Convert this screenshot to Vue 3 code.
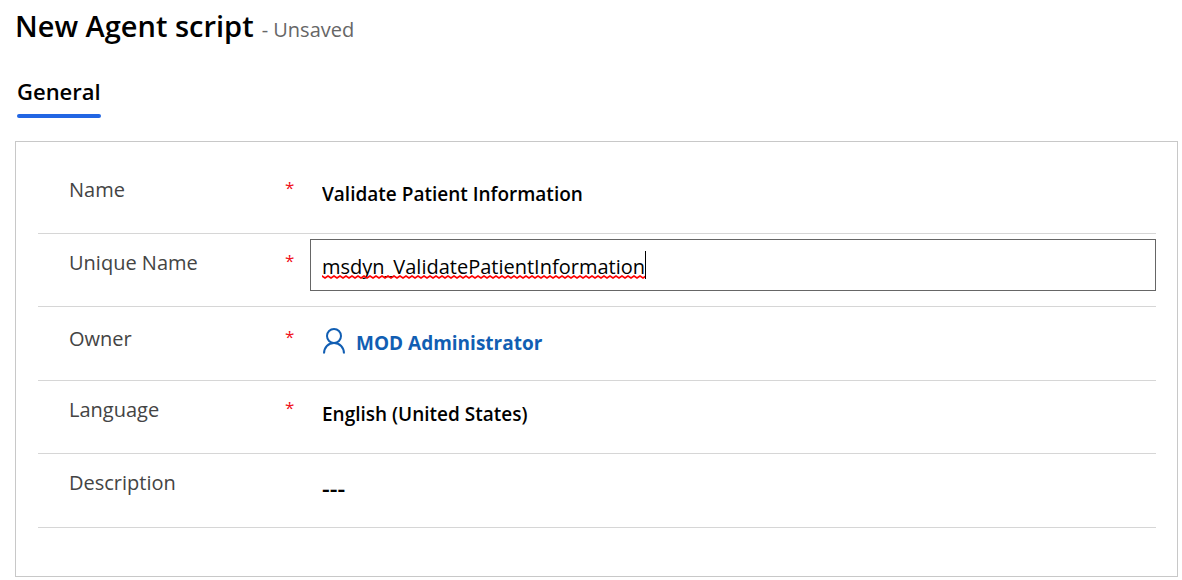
<script setup>
import { ref } from 'vue'

const name = ref('Validate Patient Information')
const uniqueName = ref('msdyn_ValidatePatientInformation')
const language = ref('English (United States)')
const description = ref('---')
</script>

<template>
  <main class="page">
    <header class="heading">
      <h1>New Agent script</h1>
      <span class="status">- Unsaved</span>
    </header>

    <nav class="tabs" role="tablist">
      <button class="tab" type="button" role="tab" aria-selected="true">General</button>
    </nav>

    <form class="card" @submit.prevent>
      <div class="row">
        <label for="name">Name</label>
        <span class="required">*</span>
        <input id="name" v-model="name" class="value" type="text" required />
      </div>

      <div class="row">
        <label for="unique-name">Unique Name</label>
        <span class="required">*</span>
        <div class="editbox">
          <span class="misspelt">
            <input id="unique-name" v-model="uniqueName" class="editing" type="text" spellcheck="false" required />
            <svg class="wave" height="4" aria-hidden="true">
              <defs>
                <pattern id="wave" width="6" height="4" patternUnits="userSpaceOnUse">
                  <path d="M-1 0.5 L0 1 L3 3 L6 1 L7 0.5" fill="none" stroke="#f00" stroke-width="1.6" />
                </pattern>
              </defs>
              <rect width="100%" height="4" fill="url(#wave)" />
            </svg>
          </span>
        </div>
      </div>

      <div class="row tall owner">
        <span class="label">Owner</span>
        <span class="required">*</span>
        <a class="person" href="#">
          <svg width="24" height="26" viewBox="0 0 24 26" fill="none" stroke="currentColor" stroke-width="2" aria-hidden="true">
            <circle cx="12" cy="8" r="7" />
            <path d="M2 25.500C2 19.500 6.200 15 12 15S22 19.500 22 25.500" />
          </svg>
          <span class="person-name">MOD Administrator</span>
        </a>
      </div>

      <div class="row">
        <label for="language">Language</label>
        <span class="required">*</span>
        <select id="language" v-model="language" class="value" required>
          <option>English (United States)</option>
        </select>
      </div>

      <div class="row tall">
        <label for="description">Description</label>
        <span></span>
        <input id="description" v-model="description" class="value blank" type="text" />
      </div>
    </form>
  </main>
</template>

<style>
body {
  background: #fff;
}
</style>

<style scoped>
.page {
  padding: 6px 4px 3px 15px;
  color: #000;
  font-family: "Open Sans", "Noto Sans", sans-serif;
  font-size: 20px;
  line-height: 28px;
}

.heading {
  display: flex;
  align-items: baseline;
  gap: 8px;
  height: 40px;
}

h1 {
  margin: 0;
  font-size: 29px;
  font-weight: 600;
  line-height: 40px;
}

.status {
  color: #666;
}

.tabs {
  display: flex;
  padding: 31px 0 23px 2px;
}

.tab {
  position: relative;
  padding: 0 0 13px;
  border: 0;
  background: none;
  color: #000;
  font: inherit;
  font-size: 22px;
  font-weight: 600;
}

.tab::after {
  position: absolute;
  right: 0;
  bottom: 0;
  left: 0;
  height: 4px;
  border-radius: 2px;
  background: #2266e3;
  content: "";
}

.card {
  padding: 19px 21px 48px 22px;
  border: 1px solid #c8c8c8;
}

.row {
  display: grid;
  box-sizing: border-box;
  grid-template-columns: 216px 56px 1fr;
  align-items: start;
  min-height: 73px;
  padding: 5px 0;
  border-bottom: 1px solid #d6d6d6;
}

.tall {
  min-height: 74px;
}

.owner {
  padding-top: 8px;
}

label,
.label {
  padding: 10px 0 0 31px;
  color: #444;
}

.required {
  padding: 8px 0 0 31px;
  color: #f01020;
  font-size: 17px;
}

.value {
  box-sizing: border-box;
  width: 100%;
  height: 52px;
  padding: 4px 12px 0;
  border: 0;
  background: transparent;
  color: #000;
  font: inherit;
  font-size: 19px;
  font-weight: 600;
  appearance: none;
  outline: 0;
}

.blank {
  font-size: 24px;
}

.editbox {
  display: flex;
  box-sizing: border-box;
  height: 52px;
  padding: 11px 11px 0;
  border: 1px solid #666;
}

.misspelt {
  position: relative;
  height: 28px;
  border-right: 1px solid #000;
}

.editing {
  display: block;
  height: 28px;
  padding: 2px 0 0;
  border: 0;
  background: transparent;
  color: #000;
  font: inherit;
  field-sizing: content;
  outline: 0;
}

.wave {
  position: absolute;
  bottom: 0;
  left: 0;
  width: 100%;
}

.person {
  display: flex;
  align-items: center;
  gap: 10px;
  height: 52px;
  padding: 0 12px;
  color: #115eb3;
  font-size: 19px;
  font-weight: 700;
  text-decoration: none;
}

.person-name {
  padding-top: 4px;
}
</style>
